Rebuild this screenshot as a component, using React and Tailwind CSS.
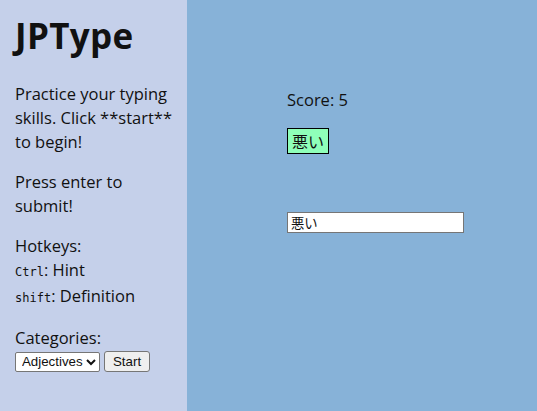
export default function App() {
  return (
    <div className="flex w-[537px] h-[411px] font-['Open_Sans',sans-serif] text-[#111]">
      <aside className="w-[187px] shrink-0 bg-[#c5d0ea] pl-[15px] pr-2">
        <h1 className="mt-[13px] text-[35px] font-bold leading-[46px] tracking-[0.3px]">JPType</h1>
        <p className="mt-[23px] text-[16.5px] leading-[24px]">
          Practice your typing skills. Click **start** to begin!
        </p>
        <p className="mt-[16px] text-[16.5px] leading-[24px]">Press enter to submit!</p>
        <div className="mt-[16px] text-[16.5px] leading-[24px]">
          <div>Hotkeys:</div>
          <div>
            <code className="font-['DejaVu_Sans_Mono',monospace] text-[12px]">Ctrl</code>: Hint
          </div>
          <div>
            <code className="font-['DejaVu_Sans_Mono',monospace] text-[12px]">shift</code>: Definition
          </div>
        </div>
        <div className="mt-[16px] text-[16.5px] leading-[24px]">Categories:</div>
        <div className="flex items-center gap-[4px] mt-[1px] font-['Liberation_Sans',sans-serif] text-[13.3px]">
          <select className="h-[20px] border border-[#767676] bg-white pl-[2px] rounded-[2px]">
            <option>Adjectives</option>
          </select>
          <button className="h-[21px] px-[8px] border border-[#767676] bg-[#efefef] rounded-[3px]">Start</button>
        </div>
      </aside>
      <main className="flex-1 bg-[#87b2d8] pl-[100px] pt-[88px]">
        <div className="text-[16.5px] leading-[24px]">Score: 5</div>
        <div className="mt-[16px] inline-block border border-black bg-[#8fffb9] px-[4px] text-[16px] leading-[24px] font-['Noto_Sans_CJK_JP',sans-serif]">
          悪い
        </div>
        <div className="mt-[56px]">
          <input
            defaultValue="悪い"
            className="w-[177px] h-[21px] border border-[#767676] bg-white px-[3px] text-[13.3px] font-['Noto_Sans_CJK_JP',sans-serif] outline-none"
          />
        </div>
      </main>
    </div>
  );
}
